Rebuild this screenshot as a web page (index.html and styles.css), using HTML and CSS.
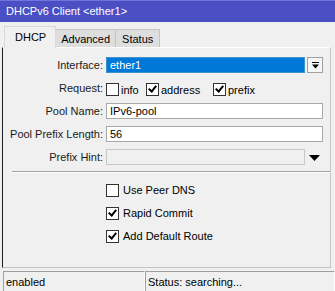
FILE: index.html
```html
<!DOCTYPE html>
<html lang="en">
<head>
  <meta charset="UTF-8">
  <title>DHCPv6 Client</title>
  <link rel="stylesheet" href="styles.css">
</head>
<body>
  <div class="window">
    <div class="titlebar">DHCPv6 Client &lt;ether1&gt;</div>
    <div class="tabs">
      <div class="tab active">DHCP</div>
      <div class="tab">Advanced</div>
      <div class="tab">Status</div>
    </div>
    <div class="panel">
      <div class="form">
        <label class="label">Interface:</label>
        <div class="field-row">
          <div class="input selected">ether1</div>
          <div class="drop-btn">
            <svg width="9" height="9" viewBox="0 0 9 9"><rect x="1" y="1" width="7" height="1" fill="#000"/><path d="M1 3.5h7l-3.5 4z" fill="#000"/></svg>
          </div>
        </div>

        <label class="label">Request:</label>
        <div class="checks">
          <span class="check info"><span class="box"></span>info</span>
          <span class="check addr"><span class="box on"></span>address</span>
          <span class="check"><span class="box on"></span>prefix</span>
        </div>

        <label class="label">Pool Name:</label>
        <div class="input">IPv6-pool</div>

        <label class="label">Pool Prefix Length:</label>
        <div class="input">56</div>

        <label class="label">Prefix Hint:</label>
        <div class="field-row">
          <div class="input disabled"></div>
          <div class="arrow">
            <svg width="11" height="7" viewBox="0 0 11 7"><path d="M0 0h11l-5.5 6z" fill="#000"/></svg>
          </div>
        </div>
      </div>

      <div class="separator"></div>

      <div class="options">
        <span class="check"><span class="box"></span>Use Peer DNS</span>
        <span class="check"><span class="box on"></span>Rapid Commit</span>
        <span class="check"><span class="box on"></span>Add Default Route</span>
      </div>
    </div>
    <div class="statusbar">
      <div class="status-cell first">enabled</div>
      <div class="status-cell">Status: searching...</div>
    </div>
  </div>
</body>
</html>
```

FILE: styles.css
```css
body {
  margin: 0;
  background: #f0f0f0;
  font-family: "Liberation Sans", Arial, sans-serif;
  font-size: 11px;
  color: #000;
}
.window {
  width: 335px;
  height: 291px;
  display: flex;
  flex-direction: column;
}
.titlebar {
  height: 22px;
  line-height: 21px;
  background: #4b4fc4;
  border-top: 1px solid #7073dc;
  box-sizing: border-box;
  color: #fff;
  padding-left: 6px;
  font-size: 11px;
}
.tabs {
  display: flex;
  padding-left: 4px;
  margin-top: 4px;
  height: 21px;
  align-items: flex-end;
}
.tab {
  background: #dedede;
  border: 1px solid #c4c4c4;
  border-bottom: none;
  padding: 0 5px;
  height: 18px;
  line-height: 19px;
  margin-left: -1px;
  box-sizing: border-box;
}
.tab:last-child {
  padding: 0 6px;
}
.tab.active {
  background: #f0f0f0;
  border-color: #d8d8d8;
  height: 22px;
  line-height: 20px;
  padding: 0 9px 0 10px;
  margin-left: 0;
  margin-bottom: -1px;
  position: relative;
  z-index: 1;
}
.panel {
  margin: 0 4px 0 2px;
  border: 1px solid #c4c4c4;
  border-left: 1px solid #1e1e1e;
  border-top: 1px solid #fff;
  height: 222px;
  box-sizing: border-box;
}
.form {
  display: grid;
  grid-template-columns: 100px 217px;
  grid-auto-rows: 16px;
  column-gap: 3px;
  row-gap: 7px;
  padding-top: 9px;
  align-items: center;
}
.label {
  text-align: right;
  white-space: nowrap;
  color: #1a1a1a;
}
.field-row {
  display: flex;
  align-items: center;
  height: 16px;
}
.input {
  height: 16px;
  box-sizing: border-box;
  border: 1px solid #a8a8a8;
  background: #fff;
  line-height: 14px;
  padding-left: 3px;
  flex: 1;
}
.input.selected {
  background: #0078d7;
  color: #fff;
  border: 1px solid #3d93c9;
  margin-right: 2px;
}
.input.disabled {
  background: #f0f0f0;
  border-color: #c8c8c8;
}
.drop-btn {
  width: 16px;
  height: 16px;
  border: 1px solid #a0a0a0;
  background: #f6f6f6;
  box-sizing: border-box;
  display: flex;
  align-items: center;
  justify-content: center;
}
.arrow {
  width: 18px;
  display: flex;
  justify-content: center;
  padding-top: 3px;
}
.checks {
  display: flex;
  align-items: center;
  margin-top: 3px;
}
.check {
  display: flex;
  align-items: center;
  white-space: nowrap;
}
.check.info {
  width: 40px;
}
.check.addr {
  width: 67px;
}
.box {
  width: 13px;
  height: 13px;
  border: 1px solid #333;
  background: #fff;
  box-sizing: border-box;
  margin-right: 2px;
  position: relative;
}
.box.on::after {
  content: "";
  position: absolute;
  left: 3px;
  top: 0px;
  width: 3px;
  height: 6px;
  border: solid #000;
  border-width: 0 2px 2px 0;
  transform: rotate(40deg);
}
.separator {
  margin: 6px 0 0 9px;
  border-top: 1px solid #a0a0a0;
  border-bottom: 1px solid #fff;
}
.options {
  display: flex;
  flex-direction: column;
  padding: 10px 0 0 103px;
  gap: 9px;
}
.options .check {
  height: 14px;
}
.options .box {
  margin-right: 4px;
}
.statusbar {
  display: flex;
  margin-top: 3px;
  padding-left: 3px;
  height: 20px;
}
.status-cell {
  border-top: 1px solid #a0a0a0;
  border-left: 1px solid #a0a0a0;
  border-right: 1px solid #fff;
  line-height: 20px;
  padding-left: 2px;
  flex: 1;
}
.status-cell.first {
  width: 142px;
  flex: none;
  box-sizing: border-box;
}
```
